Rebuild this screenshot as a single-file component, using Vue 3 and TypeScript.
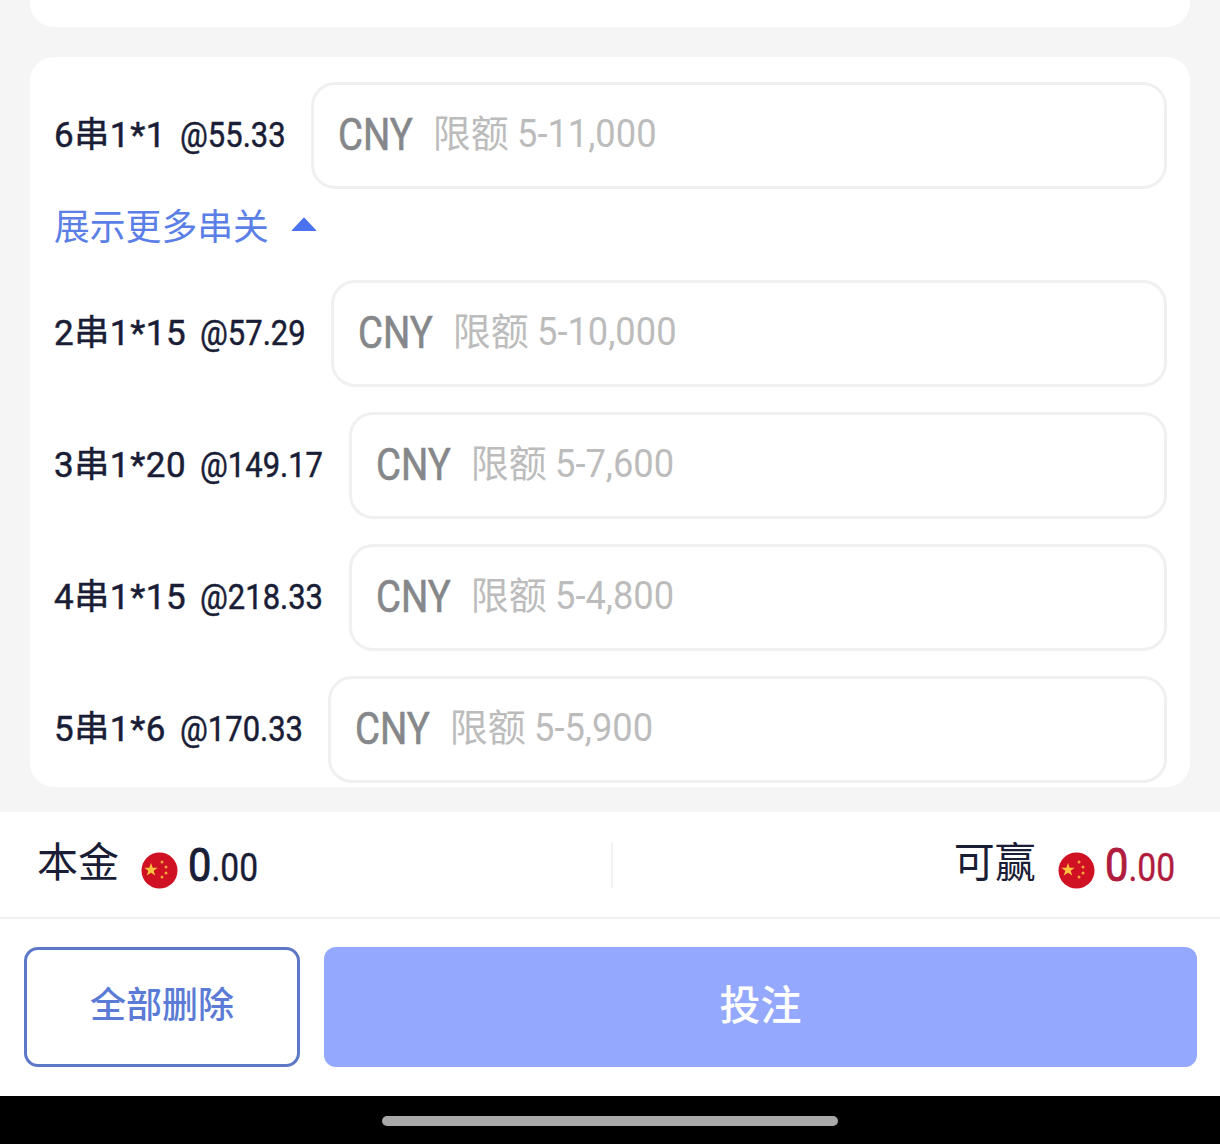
<script setup lang="ts">
interface Row { id: string; label: string; odds: string; limit: string; labelWidth: number }
const first: Row = { id: 'r6', label: '6串1*1', odds: '@55.33', limit: '5-11,000', labelWidth: 257 }
const rows: Row[] = [
  { id: 'r2', label: '2串1*15', odds: '@57.29', limit: '5-10,000', labelWidth: 277 },
  { id: 'r3', label: '3串1*20', odds: '@149.17', limit: '5-7,600', labelWidth: 295 },
  { id: 'r4', label: '4串1*15', odds: '@218.33', limit: '5-4,800', labelWidth: 295 },
  { id: 'r5', label: '5串1*6', odds: '@170.33', limit: '5-5,900', labelWidth: 274 },
]
</script>

<template>
  <div class="page">
    <div class="top-card"></div>
    <section class="card">
      <div class="row">
        <div class="label" :style="{ width: first.labelWidth + 'px' }">
          <span class="label-name">{{ first.label }}</span><span class="label-odds">{{ first.odds }}</span>
        </div>
        <div class="input"><span class="cny">CNY</span><span class="limit">限额<span class="limit-num">{{ first.limit }}</span></span></div>
      </div>
      <div class="toggle">
        <span>展示更多串关</span>
        <svg class="caret" width="28" height="16" viewBox="0 0 28 16"><path d="M14 1.2 L26.2 14.2 Q26.6 15 25.6 15 L2.4 15 Q1.4 15 1.8 14.2 Z" fill="#4a72ee" /></svg>
      </div>
      <div class="rows">
        <div v-for="r in rows" :key="r.id" class="row">
          <div class="label" :style="{ width: r.labelWidth + 'px' }">
            <span class="label-name">{{ r.label }}</span><span class="label-odds">{{ r.odds }}</span>
          </div>
          <div class="input"><span class="cny">CNY</span><span class="limit">限额<span class="limit-num">{{ r.limit }}</span></span></div>
        </div>
      </div>
    </section>
    <footer class="footer">
      <div class="summary">
        <div class="sum-side left">
          <span class="sum-label">本金</span>
          <svg class="flag" width="37" height="37" viewBox="0 0 37 37">
            <circle cx="18.5" cy="18.5" r="18" fill="#d01123" />
            <path d="M10 11 L11.7 15.7 L16.7 15.8 L12.7 18.8 L14.2 23.6 L10 20.8 L5.8 23.6 L7.3 18.8 L3.3 15.8 L8.3 15.7 Z" fill="#fbc23f" />
            <circle cx="21" cy="10" r="1.5" fill="#f3a33c" /><circle cx="25" cy="15" r="1.5" fill="#f3a33c" /><circle cx="25" cy="21" r="1.5" fill="#f3a33c" /><circle cx="21" cy="25" r="1.5" fill="#f3a33c" />
          </svg>
          <span class="amount"><span class="int">0</span><span class="dec">.00</span></span>
        </div>
        <div class="divider"></div>
        <div class="sum-side right">
          <span class="sum-label">可赢</span>
          <svg class="flag" width="37" height="37" viewBox="0 0 37 37">
            <circle cx="18.5" cy="18.5" r="18" fill="#d01123" />
            <path d="M10 11 L11.7 15.7 L16.7 15.8 L12.7 18.8 L14.2 23.6 L10 20.8 L5.8 23.6 L7.3 18.8 L3.3 15.8 L8.3 15.7 Z" fill="#fbc23f" />
            <circle cx="21" cy="10" r="1.5" fill="#f3a33c" /><circle cx="25" cy="15" r="1.5" fill="#f3a33c" /><circle cx="25" cy="21" r="1.5" fill="#f3a33c" /><circle cx="21" cy="25" r="1.5" fill="#f3a33c" />
          </svg>
          <span class="amount red"><span class="int">0</span><span class="dec">.00</span></span>
        </div>
      </div>
      <div class="actions">
        <button class="btn-clear"><span class="btn-text">全部删除</span></button>
        <button class="btn-bet"><span class="btn-text">投注</span></button>
      </div>
    </footer>
    <div class="home-bar"><div class="home-indicator"></div></div>
  </div>
</template>

<style>
html, body { margin: 0; background: #f5f5f5; }
</style>

<style scoped>
.page {
  width: 1220px;
  height: 1144px;
  display: flex;
  flex-direction: column;
  background: #f5f5f5;
  overflow: hidden;
  font-family: "Roboto", "Noto Sans CJK SC", sans-serif;
  color: #1a1d36;
}
.top-card {
  height: 27px;
  margin: 0 30px;
  background: #fff;
  border-radius: 0 0 24px 24px;
  flex: none;
}
.card {
  flex: none;
  height: 730px;
  box-sizing: border-box;
  margin: 30px 30px 0;
  padding: 25px 23px 0 24px;
  background: #fff;
  border-radius: 24px;
  overflow: hidden;
}
.row { display: flex; align-items: center; height: 107px; }
.rows { display: flex; flex-direction: column; gap: 25px; margin-top: 14px; }
.label {
  flex: none;
  font-size: 35px;
  white-space: nowrap;
  -webkit-text-stroke: 0.5px #1a1d36;
  padding-bottom: 8px;
}
.label-name { margin-right: 14px; letter-spacing: 0.6px; }
.label-odds { display: inline-block; transform: scaleX(0.885); transform-origin: left center; }
.input {
  flex: 1;
  height: 107px;
  box-sizing: border-box;
  border: 3px solid #f0f0f0;
  border-radius: 24px;
  display: flex;
  align-items: center;
  padding-left: 24px;
  gap: 9px;
}
.cny {
  font-size: 44px;
  color: #85878a;
  -webkit-text-stroke: 0.6px #85878a;
  padding-bottom: 2px;
  transform: scaleX(0.87);
  transform-origin: left center;
}
.limit { font-size: 38px; color: #bcbcbc; padding-bottom: 10px; }
.limit-num { display: inline-block; margin-left: 8px; transform: scaleX(0.955); transform-origin: left center; }
.toggle {
  height: 78px;
  display: flex;
  align-items: center;
  gap: 21px;
  font-size: 35.8px;
  color: #5b7fe6;
  margin-top: -1px;
  padding-bottom: 6px;
  box-sizing: border-box;
}
.caret { margin-top: 0; }
.footer { flex: none; margin-top: 25px; background: #fff; }
.summary {
  height: 105px;
  box-sizing: border-box;
  display: flex;
  align-items: center;
  padding: 0 45px 0 37px;
}
.sum-side { display: flex; align-items: center; }
.sum-side.left { flex: 0 0 574px; }
.sum-side.right { flex: 1; justify-content: flex-end; }
.sum-label { font-size: 41px; margin-right: 22px; margin-top: -12px; }
.flag { margin-right: 10px; margin-top: 12px; }
.amount {
  display: inline-flex;
  align-items: baseline;
  margin-right: -9px;
  transform: scaleX(0.885);
  transform-origin: left center;
}
.int { font-size: 47px; -webkit-text-stroke: 1px currentColor; }
.dec { font-size: 38px; -webkit-text-stroke: 0.4px currentColor; }
.red { color: #b01c3e; }
.divider { width: 2px; height: 46px; background: #f2f2f2; flex: none; }
.actions {
  border-top: 2px solid #f0f0f0;
  height: 179px;
  box-sizing: border-box;
  display: flex;
  gap: 24px;
  padding: 28px 23px 0 24px;
}
.btn-clear {
  width: 276px;
  height: 120px;
  box-sizing: border-box;
  border: 3px solid #5d78c6;
  border-radius: 14px;
  background: #fff;
  color: #5b7bd6;
  font-family: "Noto Sans CJK SC", sans-serif;
  font-size: 36px;
  font-weight: 500;
}
.btn-bet {
  flex: 1;
  height: 120px;
  border: 0;
  border-radius: 12px;
  background: #94a9fd;
  color: #fff;
  font-family: "Noto Sans CJK SC", sans-serif;
  font-size: 41px;
  font-weight: 500;
}
.btn-text { display: block; margin-top: -10px; }
.home-bar {
  flex: 1;
  background: #000;
  display: flex;
  justify-content: center;
  padding-top: 20px;
}
.home-indicator { width: 456px; height: 10px; border-radius: 5px; background: #a9a9a9; }
</style>
